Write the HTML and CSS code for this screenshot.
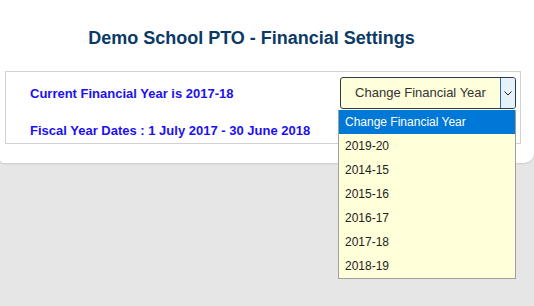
FILE: index.html
```html
<!DOCTYPE html>
<html>
<head>
<meta charset="utf-8">
<link rel="stylesheet" href="styles.css">
</head>
<body>
<div class="card">
  <h1 class="title">Demo School PTO - Financial Settings</h1>
  <div class="box">
    <div class="label label-1">Current Financial Year is 2017-18</div>
    <div class="select-wrap">
      <div class="select">
        <span class="select-text">Change Financial Year</span>
        <span class="select-arrow">
          <svg width="8" height="5" viewBox="0 0 8 5"><path d="M0.5 0.5 L4 4 L7.5 0.5" fill="none" stroke="#222" stroke-width="1"/></svg>
        </span>
      </div>
      <ul class="dropdown">
        <li class="opt opt-active">Change Financial Year</li>
        <li class="opt">2019-20</li>
        <li class="opt">2014-15</li>
        <li class="opt">2015-16</li>
        <li class="opt">2016-17</li>
        <li class="opt">2017-18</li>
        <li class="opt">2018-19</li>
      </ul>
    </div>
    <div class="label label-2">Fiscal Year Dates : 1 July 2017 - 30 June 2018</div>
  </div>
</div>
</body>
</html>
```
FILE: styles.css
```css
html, body {
  margin: 0;
  padding: 0;
}
body {
  background: #e6e6e6;
  font-family: "Liberation Sans", Arial, sans-serif;
  width: 534px;
  height: 306px;
  overflow: hidden;
}
.card {
  background: #ffffff;
  height: 163px;
  box-sizing: border-box;
  padding-top: 28px;
  border-radius: 0 0 10px 4px;
  box-shadow: 0 1px 2px rgba(0, 0, 0, 0.12);
}
.title {
  margin: 0;
  padding-right: 31px;
  text-align: center;
  font-size: 18px;
  line-height: 21px;
  font-weight: bold;
  color: #0b3a66;
}
.box {
  margin: 22px 13px 0 5px;
  border: 1px solid #d2d2d2;
  height: 73px;
  box-sizing: border-box;
  display: grid;
  grid-template-columns: 1fr auto;
  grid-template-rows: 32px 16px;
  row-gap: 12px;
  padding: 5px 4px 0 24px;
}
.label {
  font-size: 13px;
  line-height: 16px;
  font-weight: bold;
  color: #2010f0;
  white-space: nowrap;
}
.label-1 {
  align-self: center;
  margin-top: 2px;
}
.label-2 {
  grid-column: 1 / 3;
  margin-top: 2px;
}
.select-wrap {
  position: relative;
  width: 176px;
  height: 32px;
}
.select {
  display: flex;
  height: 32px;
  box-sizing: border-box;
  border: 1px solid #2f3a48;
  border-radius: 3px;
  background: #ffffdc;
  overflow: hidden;
}
.select-text {
  flex: 1;
  text-align: center;
  font-size: 13px;
  line-height: 30px;
  color: #333333;
}
.select-arrow {
  width: 16px;
  box-sizing: border-box;
  background: #e5f1fb;
  border: 1px solid #2a6cb0;
  border-radius: 0 2px 2px 0;
  margin: -1px -1px -1px 0;
  display: flex;
  align-items: center;
  justify-content: center;
}
.dropdown {
  position: absolute;
  top: 33px;
  left: -2px;
  width: 178px;
  box-sizing: border-box;
  margin: 0;
  padding: 0;
  list-style: none;
  background: #ffffda;
  border: 1px solid #a0a0a0;
  border-top: none;
}
.opt {
  height: 24px;
  line-height: 24px;
  padding-left: 6px;
  font-size: 12px;
  color: #222222;
}
.opt-active {
  background: #0078d7;
  color: #ffffff;
}
```
